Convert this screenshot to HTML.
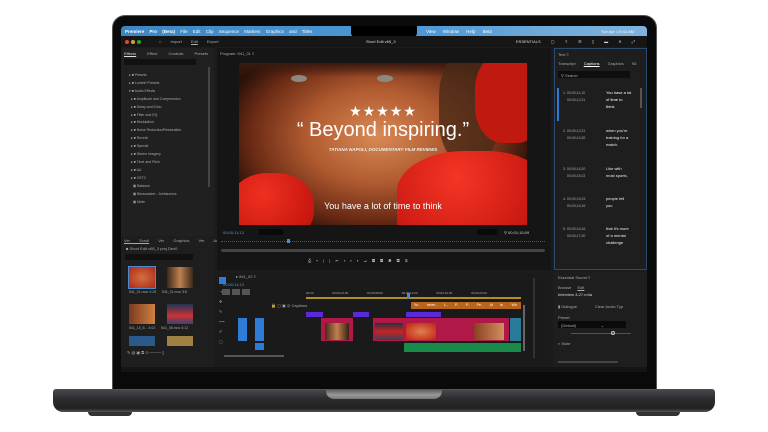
<!DOCTYPE html>
<html><head><meta charset="utf-8"><style>
*{margin:0;padding:0;box-sizing:border-box}
body{width:768px;height:432px;background:#fff;position:relative;overflow:hidden;font-family:"Liberation Sans",sans-serif;color:#bbb}
.a{position:absolute}
.t{position:absolute;font-size:4px;color:#aaa;white-space:nowrap}
</style></head><body>
<!-- base -->
<div class="a" style="left:88px;top:410px;width:44px;height:6px;background:#333;border-radius:0 0 4px 4px"></div>
<div class="a" style="left:636px;top:410px;width:44px;height:6px;background:#333;border-radius:0 0 4px 4px"></div>
<div class="a" style="left:53px;top:389px;width:662px;height:23px;border-radius:3px 3px 10px 10px;background:linear-gradient(#4a4b4e,#2c2d30 40%,#222 85%,#555)"></div>
<div class="a" style="left:326px;top:389px;width:116px;height:10px;border-radius:0 0 8px 8px;background:linear-gradient(#555,#999 60%,#777)"></div>
<!-- lid -->
<div class="a" style="left:112px;top:15px;width:545px;height:375px;background:#0a0a0a;border-radius:13px 13px 0 0;border:1px solid #555"></div>
<div class="a" style="left:121px;top:26px;width:526px;height:346px;background:#1c1c1c;overflow:hidden;border-radius:4px 4px 0 0">
 <!-- menubar -->
 <div class="a" style="left:0;top:0;width:526px;height:10px;background:linear-gradient(90deg,#3d86c6,#4f9ad6 60%,#6ea9d8 80%,#7fb3dd)"></div>
 <div class="t" style="left:4px;top:3px;color:#fff;font-size:4.5px;word-spacing:4px">  <b>Premiere Pro (Beta)</b> File Edit Clip Sequence Markers Graphics and Titles</div>
 <div class="t" style="left:305px;top:3px;color:#fff;font-size:4.5px;word-spacing:6px">View Window Help Beta</div>
 <div class="t" style="left:480px;top:3px;color:#fff;font-size:4px">Tue Apr 1 9:41 AM</div>
 <div class="a" style="left:230px;top:0;width:66px;height:11px;background:#000;border-radius:0 0 4px 4px"></div>
 <!-- header -->
 <div class="a" style="left:0;top:10px;width:526px;height:11px;background:#161616"></div>
 <div class="a" style="left:4px;top:14px;width:4px;height:4px;border-radius:50%;background:#e0443e"></div>
 <div class="a" style="left:10px;top:14px;width:4px;height:4px;border-radius:50%;background:#dea123"></div>
 <div class="a" style="left:16px;top:14px;width:4px;height:4px;border-radius:50%;background:#1aab29"></div>
 <div class="t" style="left:38px;top:13px;word-spacing:8px">⌂ Import <u>Edit</u> Export</div>
 <div class="t" style="left:245px;top:13px;color:#ddd">Short Edit v65_3</div>
 <div class="t" style="left:395px;top:13px;color:#ddd;word-spacing:9px">ESSENTIALS ▢ ⇪ ☰ ▯ ▬ ✕ ⤢</div>
 <!-- left effects panel -->
 <div class="a" style="left:0;top:22px;width:93px;height:188px;background:#202020"></div>
 <div class="t" style="left:3px;top:25px;word-spacing:10px"><span style="color:#ddd;text-decoration:underline">Effects</span> Effect Controls Presets</div>
 <div class="a" style="left:3px;top:33px;width:72px;height:6px;background:#111"></div>
 <div class="t" style="left:8px;top:46px;line-height:7.9px;font-size:3.5px">▸ ■ Presets<br>▸ ■ Lumetri Presets<br>▾ ■ Audio Effects<br>&nbsp; ▸ ■ Amplitude and Compression<br>&nbsp; ▸ ■ Delay and Echo<br>&nbsp; ▸ ■ Filter and EQ<br>&nbsp; ▸ ■ Modulation<br>&nbsp; ▸ ■ Noise Reduction/Restoration<br>&nbsp; ▸ ■ Reverb<br>&nbsp; ▸ ■ Special<br>&nbsp; ▸ ■ Stereo Imagery<br>&nbsp; ▸ ■ Time and Pitch<br>&nbsp; ▸ ■ AU<br>&nbsp; ▸ ■ VST3<br>&nbsp;&nbsp;&nbsp; ▣ Balance<br>&nbsp;&nbsp;&nbsp; ▣ Binauralizer - Ambisonics<br>&nbsp;&nbsp;&nbsp; ▣ Mute</div>
 <div class="a" style="left:87px;top:41px;width:2px;height:120px;background:#444"></div>
 <!-- project panel -->
 <div class="a" style="left:0;top:210px;width:93px;height:135px;background:#1e1e1e"></div>
 <div class="t" style="left:3px;top:212px;word-spacing:8px"><span style="text-decoration:underline">Ver Scroll</span> Ver Graphics Ver Au</div>
 <div class="t" style="left:5px;top:220px">■ Short Edit v65_3 proj Dev0</div>
 <div class="a" style="left:4px;top:228px;width:68px;height:6px;background:#111"></div>
 <div class="a" style="left:8px;top:241px;width:26px;height:21px;background:radial-gradient(#d07040,#b02818);outline:1px solid #4a8ad0"></div>
 <div class="a" style="left:46px;top:241px;width:26px;height:21px;background:linear-gradient(90deg,#3a2a1a,#c08050,#3a2a1a)"></div>
 <div class="a" style="left:8px;top:278px;width:26px;height:20px;background:linear-gradient(90deg,#7a3a20,#d08040)"></div>
 <div class="a" style="left:46px;top:278px;width:26px;height:20px;background:linear-gradient(#235,#c33 60%,#347)"></div>
 <div class="a" style="left:8px;top:310px;width:26px;height:10px;background:#2a5a8a"></div>
 <div class="a" style="left:46px;top:310px;width:26px;height:10px;background:#a08040"></div>
 <div class="t" style="left:8px;top:264px;font-size:3.5px">541_01.mov 4:19 &nbsp;&nbsp;&nbsp;&nbsp; 541_01.mov 3:8</div>
 <div class="t" style="left:8px;top:300px;font-size:3.5px">541_15_5... 4:02 &nbsp;&nbsp;&nbsp;&nbsp; 541_08.mov 4:12</div>
 <div class="t" style="left:6px;top:324px">✎ ▤ ▣ ⧉ ⊙ ──── ▯</div>
 <!-- program monitor -->
 <div class="a" style="left:96px;top:22px;width:334px;height:222px;background:#151515"></div>
 <div class="t" style="left:99px;top:25px">Program: 541_01 ≡</div>
 <div class="a" style="left:118px;top:37px;width:288px;height:162px;overflow:hidden;background:radial-gradient(ellipse 55% 65% at 48% 45%,#d88a55,#b05a30 45%,#6a2a14 80%,#2a120a)">
  <div class="a" style="left:0;top:0;width:288px;height:14px;background:linear-gradient(#3a1a10,transparent)"></div>
  <div class="a" style="left:200px;top:-10px;width:60px;height:110px;border-radius:40%;background:#4a2a18;opacity:.8"></div>
  <div class="a" style="left:236px;top:-10px;width:70px;height:90px;border-radius:40%;background:#c01a10"></div>
  <div class="a" style="left:52px;top:12px;width:16px;height:7px;border-radius:50%;background:#8a8a80"></div>
  <div class="a" style="left:138px;top:12px;width:16px;height:7px;border-radius:50%;background:#8a8a80"></div>
  <div class="a" style="left:-10px;top:110px;width:85px;height:70px;border-radius:45%;background:radial-gradient(circle at 40% 30%,#f03020,#b80e0a)"></div>
  <div class="a" style="left:158px;top:88px;width:150px;height:90px;border-radius:45% 40% 0 0;background:radial-gradient(circle at 40% 30%,#f53525,#b80e0a)"></div>
  <div class="t" style="left:0;width:288px;text-align:center;top:40px;font-size:14px;color:#fff;letter-spacing:1px">★★★★★</div>
  <div class="t" style="left:0;width:288px;text-align:center;top:56px;font-size:20px;color:#fff">“ Beyond inspiring.”</div>
  <div class="t" style="left:0;width:288px;text-align:center;top:84px;font-size:4.5px;color:#eee;font-style:italic;font-weight:bold">TATIANA NAPOLI, DOCUMENTARY FILM REVIEWS</div>
  <div class="t" style="left:0;width:288px;text-align:center;top:138px;font-size:9px;color:#fff">You have a lot of time to think</div>
 </div>
 <div class="t" style="left:102px;top:204px;color:#4a9ae8">00;00;11;13</div>
 <div class="a" style="left:138px;top:203px;width:24px;height:6px;background:#0a0a0a"></div>
 <div class="a" style="left:356px;top:203px;width:20px;height:6px;background:#0a0a0a"></div>
 <div class="t" style="left:383px;top:204px;color:#ccc">⚲ 00;01;15;09</div>
 <div class="a" style="left:100px;top:215px;width:324px;height:2px;border-top:1px dotted #555"></div>
 <div class="a" style="left:166px;top:213px;width:3px;height:4px;background:#4a8ad0"></div>
 <div class="a" style="left:100px;top:223px;width:324px;height:3px;background:#444;border-radius:2px"></div>
 <div class="t" style="left:187px;top:232px;color:#bbb;word-spacing:4px">⎙ ▾ | | ⇤ ◂ ▸ ▸ ⇥ ▦ ▦ ◉ ▤ ⇅</div>
 <!-- timeline -->
 <div class="a" style="left:96px;top:247px;width:334px;height:98px;background:#1a1a1a"></div>
 <div class="a" style="left:98px;top:251px;width:7px;height:7px;background:#2f7bd8"></div>
 <div class="t" style="left:98px;top:261px;line-height:10px;color:#999">⇢<br>✥<br>✎<br>⟷<br>✐<br>▢</div>
 <div class="t" style="left:115px;top:248px">▸ 541_02 ≡</div>
 <div class="t" style="left:102px;top:256px;color:#4a9ae8">00;00;11;13</div>
 <div class="a" style="left:101px;top:263px;width:8px;height:6px;background:#555"></div>
 <div class="a" style="left:111px;top:263px;width:8px;height:6px;background:#555"></div>
 <div class="a" style="left:121px;top:263px;width:8px;height:6px;background:#555"></div>
 <div class="t" style="left:185px;top:265px;font-size:3px;word-spacing:18px">00;00 00;00;04;00 00;00;08;00 00;00;12;00 00;00;16;00 00;00;20;00</div>
 <div class="a" style="left:185px;top:271px;width:215px;height:2px;background:#b09020"></div>
 <div class="a" style="left:286px;top:267px;width:3px;height:6px;background:#4a8ad0"></div>
 <div class="t" style="left:150px;top:277px">🔒 ▢ ▣ ◎ Captions</div>
 <div class="a" style="left:290px;top:276px;width:110px;height:7px;background:#b8641a"></div>
 <div class="t" style="left:293px;top:277px;color:#fff;font-size:3.5px;word-spacing:6px">Yo.. when.. L.. P.. P.. Pe.. At le.. Wh</div>
 <div class="a" style="left:185px;top:286px;width:17px;height:5px;background:#5a2ad8"></div>
 <div class="a" style="left:232px;top:286px;width:16px;height:5px;background:#5a2ad8"></div>
 <div class="a" style="left:285px;top:286px;width:35px;height:5px;background:#5a2ad8"></div>
 <div class="a" style="left:117px;top:292px;width:9px;height:23px;background:#2f7bd8"></div>
 <div class="a" style="left:134px;top:292px;width:9px;height:23px;background:#2f7bd8"></div>
 <div class="a" style="left:200px;top:292px;width:32px;height:23px;background:#b01848"></div>
 <div class="a" style="left:204px;top:297px;width:24px;height:17px;background:linear-gradient(90deg,#4a2a18,#c08050,#3a2010)"></div>
 <div class="a" style="left:252px;top:292px;width:31px;height:23px;background:#b01848"></div>
 <div class="a" style="left:254px;top:297px;width:28px;height:17px;background:linear-gradient(#234,#c22,#345)"></div>
 <div class="a" style="left:283px;top:292px;width:105px;height:23px;background:#b01848"></div>
 <div class="a" style="left:285px;top:297px;width:30px;height:17px;background:radial-gradient(#e08050,#c02010)"></div>
 <div class="a" style="left:353px;top:297px;width:30px;height:17px;background:linear-gradient(90deg,#8a4020,#d09060)"></div>
 <div class="a" style="left:389px;top:292px;width:11px;height:23px;background:#2a7a9a"></div>
 <div class="a" style="left:283px;top:317px;width:117px;height:9px;background:#1a8a4a"></div>
 <div class="a" style="left:134px;top:317px;width:9px;height:7px;background:#2f7bd8"></div>
 <div class="a" style="left:103px;top:329px;width:60px;height:2px;background:#555"></div>
 <div class="a" style="left:402px;top:279px;width:2px;height:46px;background:#666"></div>
 <div class="a" style="left:412px;top:252px;width:2px;height:80px;background:#333"></div>
 <!-- right text panel -->
 <div class="a" style="left:433px;top:22px;width:93px;height:222px;background:#1e1e1e;border:1px solid #2a4a70"></div>
 <div class="t" style="left:437px;top:26px">Text ≡</div>
 <div class="t" style="left:437px;top:35px;word-spacing:7px">Transcript <span style="color:#fff;text-decoration:underline">Captions</span> Graphics Sti</div>
 <div class="a" style="left:437px;top:45px;width:72px;height:7px;background:#0e0e0e"></div>
 <div class="t" style="left:440px;top:47px">⚲ Search</div>
 <div class="a" style="left:436px;top:62px;width:2px;height:33px;background:#2f7bd8"></div>
 <div class="a" style="left:519px;top:62px;width:2px;height:20px;background:#555"></div>
 <div class="t" style="left:442px;top:64px;line-height:7px;font-size:3.5px">1. 00;00;11;10<br>&nbsp;&nbsp;&nbsp; 00;00;12;21</div>
 <div class="t" style="left:485px;top:63px;line-height:7px;color:#fff;font-size:4px">You have a lot<br>of time to<br>think</div>
 <div class="t" style="left:442px;top:102px;line-height:7px;font-size:3.5px">2. 00;00;12;21<br>&nbsp;&nbsp;&nbsp; 00;00;14;20</div>
 <div class="t" style="left:485px;top:101px;line-height:7px;color:#eee;font-size:4px">when you're<br>training for a<br>match.</div>
 <div class="t" style="left:442px;top:140px;line-height:7px;font-size:3.5px">3. 00;00;14;20<br>&nbsp;&nbsp;&nbsp; 00;00;15;23</div>
 <div class="t" style="left:485px;top:139px;line-height:7px;color:#eee;font-size:4px">Like with<br>most sports,</div>
 <div class="t" style="left:442px;top:170px;line-height:7px;font-size:3.5px">4. 00;00;15;23<br>&nbsp;&nbsp;&nbsp; 00;00;16;16</div>
 <div class="t" style="left:485px;top:169px;line-height:7px;color:#eee;font-size:4px">people tell<br>you</div>
 <div class="t" style="left:442px;top:200px;line-height:7px;font-size:3.5px">5. 00;00;16;16<br>&nbsp;&nbsp;&nbsp; 00;00;17;20</div>
 <div class="t" style="left:485px;top:199px;line-height:7px;color:#eee;font-size:4px">that it's more<br>of a mental<br>challenge</div>
 <!-- essential sound -->
 <div class="a" style="left:433px;top:246px;width:93px;height:99px;background:#1e1e1e"></div>
 <div class="t" style="left:437px;top:249px">Essential Sound ≡</div>
 <div class="t" style="left:437px;top:259px;word-spacing:5px">Browse <u>Edit</u></div>
 <div class="t" style="left:437px;top:266px;color:#ddd">Interview 3-27.m4a</div>
 <div class="t" style="left:437px;top:278px">▮ Dialogue &nbsp;&nbsp;&nbsp;&nbsp;&nbsp;&nbsp;&nbsp;&nbsp;&nbsp;&nbsp;&nbsp;&nbsp;&nbsp;&nbsp; Clear Audio Typ</div>
 <div class="t" style="left:437px;top:289px">Preset</div>
 <div class="a" style="left:437px;top:295px;width:68px;height:7px;background:#0a0a0a"></div>
 <div class="t" style="left:440px;top:297px">(Default) &nbsp;&nbsp;&nbsp;&nbsp;&nbsp;&nbsp;&nbsp;&nbsp;&nbsp;&nbsp;&nbsp;&nbsp;&nbsp;&nbsp;&nbsp;&nbsp;&nbsp;&nbsp;&nbsp;&nbsp; ⌄</div>
 <div class="a" style="left:450px;top:307px;width:60px;height:1px;background:#555"></div>
 <div class="a" style="left:490px;top:305px;width:4px;height:4px;border-radius:50%;border:1px solid #ccc"></div>
 <div class="t" style="left:437px;top:315px">◐ Mute</div>
 <div class="a" style="left:437px;top:335px;width:60px;height:2px;background:#444"></div>
 <div class="a" style="left:0;top:341px;width:526px;height:5px;background:#141414"></div>
</div>
</body></html>
